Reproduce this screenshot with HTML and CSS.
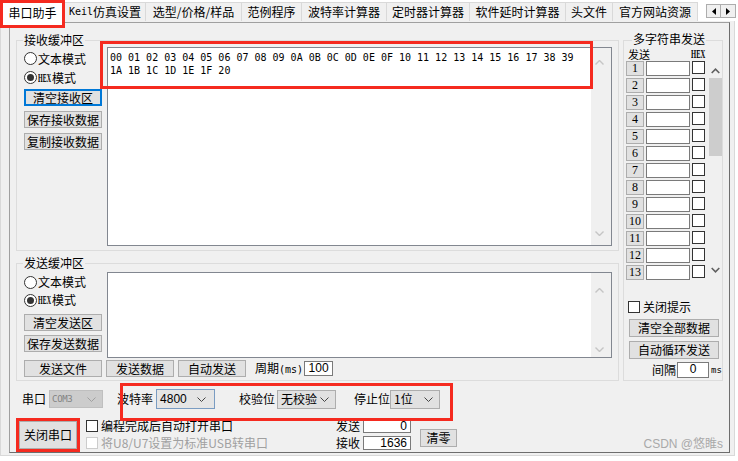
FILE: index.html
```html
<!DOCTYPE html>
<html lang="zh-CN">
<head>
<meta charset="utf-8">
<title>串口助手</title>
<link rel="stylesheet" href="styles.css">
</head>
<body>
<div class="win">
  <div class="tabs">
    <div class="tab sel t1">串口助手</div>
    <div class="tab t2"><span class="keil">Keil</span>仿真设置</div>
    <div class="tab t3">选型/价格/样品</div>
    <div class="tab t4">范例程序</div>
    <div class="tab t5">波特率计算器</div>
    <div class="tab t6">定时器计算器</div>
    <div class="tab t7">软件延时计算器</div>
    <div class="tab t8">头文件</div>
    <div class="tab t9">官方网站资源</div>
    <div class="tabnav">
      <span class="navbtn"><svg width="4" height="7" viewBox="0 0 4 7"><path d="M4 0v7L0 3.5z" fill="#000"/></svg></span>
      <span class="navbtn"><svg width="4" height="7" viewBox="0 0 4 7"><path d="M0 0v7l4-3.5z" fill="#000"/></svg></span>
    </div>
  </div>
  <div class="page">
    <div class="frame">
      <div class="top">
        <div class="leftcol">
          <div class="group recv">
            <span class="gtitle">接收缓冲区</span>
            <div class="ctrls">
              <div class="radio"><span class="rb"></span>文本模式</div>
              <div class="radio"><span class="rb on"></span><span class="hx">HEX</span>模式</div>
              <div class="btn focus b1">清空接收区</div>
              <div class="btn b2">保存接收数据</div>
              <div class="btn b2">复制接收数据</div>
            </div>
            <div class="memo recvmemo">
              <div class="memotext">00 01 02 03 04 05 06 07 08 09 0A 0B 0C 0D 0E 0F 10 11 12 13 14 15 16 17 38 39<br>1A 1B 1C 1D 1E 1F 20</div>
              <div class="vs">
                <svg width="9" height="5" viewBox="0 0 9 5"><path d="M.5 4.5l4-4 4 4" stroke="#c5c5c5" stroke-width="1.4" fill="none"/></svg>
                <svg width="9" height="5" viewBox="0 0 9 5"><path d="M.5.5l4 4 4-4" stroke="#c5c5c5" stroke-width="1.4" fill="none"/></svg>
              </div>
              <div class="mark markhex"></div>
            </div>
          </div>
          <div class="group send">
            <span class="gtitle">发送缓冲区</span>
            <div class="srow">
              <div class="ctrls sctrls">
                <div class="radio sr"><span class="rb"></span>文本模式</div>
                <div class="radio sr"><span class="rb on"></span><span class="hx">HEX</span>模式</div>
                <div class="btn b3">清空发送区</div>
                <div class="btn b4">保存发送数据</div>
              </div>
              <div class="memo sendmemo">
                <div class="memotext"></div>
                <div class="vs vs2">
                  <svg width="9" height="5" viewBox="0 0 9 5"><path d="M.5 4.5l4-4 4 4" stroke="#c5c5c5" stroke-width="1.4" fill="none"/></svg>
                  <svg width="9" height="5" viewBox="0 0 9 5"><path d="M.5.5l4 4 4-4" stroke="#c5c5c5" stroke-width="1.4" fill="none"/></svg>
                </div>
              </div>
            </div>
            <div class="sbar">
              <div class="btn w78">发送文件</div>
              <div class="btn w68 ml4">发送数据</div>
              <div class="btn w68 ml4">自动发送</div>
              <span class="period">周期<span class="mono">(ms)</span></span>
              <div class="edit e100">100</div>
            </div>
          </div>
        </div>
        <div class="group multi">
          <span class="gtitle mtitle">多字符串发送</span>
          <div class="mhead"><span>发送</span><span class="hx hx2">HEX</span></div>
          <div class="mlist">
            <div class="mrows">
              <div class="mrow"><span class="nbtn">1</span><span class="medit"></span><span class="cb"></span></div>
              <div class="mrow"><span class="nbtn">2</span><span class="medit"></span><span class="cb"></span></div>
              <div class="mrow"><span class="nbtn">3</span><span class="medit"></span><span class="cb"></span></div>
              <div class="mrow"><span class="nbtn">4</span><span class="medit"></span><span class="cb"></span></div>
              <div class="mrow"><span class="nbtn">5</span><span class="medit"></span><span class="cb"></span></div>
              <div class="mrow"><span class="nbtn">6</span><span class="medit"></span><span class="cb"></span></div>
              <div class="mrow"><span class="nbtn">7</span><span class="medit"></span><span class="cb"></span></div>
              <div class="mrow"><span class="nbtn">8</span><span class="medit"></span><span class="cb"></span></div>
              <div class="mrow"><span class="nbtn">9</span><span class="medit"></span><span class="cb"></span></div>
              <div class="mrow"><span class="nbtn">10</span><span class="medit"></span><span class="cb"></span></div>
              <div class="mrow"><span class="nbtn">11</span><span class="medit"></span><span class="cb"></span></div>
              <div class="mrow"><span class="nbtn">12</span><span class="medit"></span><span class="cb"></span></div>
              <div class="mrow"><span class="nbtn">13</span><span class="medit"></span><span class="cb"></span></div>
            </div>
            <div class="mscroll">
              <svg width="9" height="6" viewBox="0 0 9 6"><path d="M.7 5l3.8-3.8L8.3 5" stroke="#606060" stroke-width="1.6" fill="none"/></svg>
              <div class="thumb"></div>
              <div class="fill"></div>
              <svg width="9" height="6" viewBox="0 0 9 6"><path d="M.7 1l3.8 3.8L8.3 1" stroke="#606060" stroke-width="1.6" fill="none"/></svg>
            </div>
          </div>
          <div class="chk tipchk"><span class="cb"></span>关闭提示</div>
          <div class="btn mbtn m1">清空全部数据</div>
          <div class="btn mbtn m2">自动循环发送</div>
          <div class="gaprow"><span class="lbl">间隔</span><div class="edit e0">0</div><span class="mono ms">ms</span></div>
        </div>
      </div>
      <div class="bottom">
        <div class="brow1">
          <span class="lbl com">串口</span>
          <div class="combo dis cw54"><span class="c3">COM3</span><svg width="9" height="5" viewBox="0 0 9 5"><path d="M.5.5l4 4 4-4" stroke="#a0a0a0" fill="none"/></svg></div>
          <div class="serial">
            <span class="lbl">波特率</span>
            <div class="combo hot cw59"><span>4800</span><svg width="9" height="5" viewBox="0 0 9 5"><path d="M.5.5l4 4 4-4" stroke="#444" fill="none"/></svg></div>
            <span class="lbl ml24">校验位</span>
            <div class="combo cw59 ml2"><span class="cjk">无校验</span><svg width="9" height="5" viewBox="0 0 9 5"><path d="M.5.5l4 4 4-4" stroke="#444" fill="none"/></svg></div>
            <span class="lbl ml18">停止位</span>
            <div class="combo cw50"><span class="cjk">1位</span><svg width="9" height="5" viewBox="0 0 9 5"><path d="M.5.5l4 4 4-4" stroke="#444" fill="none"/></svg></div>
          </div>
        </div>
        <div class="brow2">
          <div class="closewrap"><div class="btn closebtn">关闭串口</div></div>
          <div class="chkcol">
            <div class="chk"><span class="cb"></span>编程完成后自动打开串口</div>
            <div class="chk off"><span class="cb"></span>将U8/U7设置为标准USB转串口</div>
          </div>
          <div class="stats">
            <div class="srow2"><span class="lbl">发送</span><div class="edit cnt">0</div></div>
            <div class="srow2"><span class="lbl">接收</span><div class="edit cnt">1636</div></div>
          </div>
          <div class="btn clr">清零</div>
        </div>
      </div>
      <div class="wm">CSDN @悠睢s</div>
    </div>
  </div>
</div>
</body>
</html>
```
FILE: styles.css
```css
*{box-sizing:border-box;margin:0;padding:0}
html,body{background:#fff}
body{font-family:"Noto Sans CJK SC","Noto Sans",sans-serif;font-size:12px;line-height:14px;color:#000}
.win{width:738px;height:461px;overflow:hidden}

.tabs{display:flex;height:21px;position:relative;z-index:3}
.tab{flex:none;height:19px;margin-top:2px;background:#f0f0f0;border:1px solid #d9d9d9;border-left:none;border-bottom:none;display:flex;align-items:center;justify-content:center;white-space:nowrap}
.tab.sel{height:28px;margin-top:0;border:3px solid #f52a1f;background:#fff;align-items:flex-start;padding-top:3px}
.t1{width:65px}.t2{width:81px}.t3{width:96px}.t4{width:60px}.t5{width:85px}.t6{width:83px}.t7{width:96px}.t8{width:47px}.t9{width:85px}
.keil{font-family:"DejaVu Sans Mono",monospace;font-size:10px}
.tabnav{display:flex;margin:4px 0 0 8px;height:14px}
.navbtn{width:15px;height:14px;border:1px solid #adadad;background:#f0f0f0;display:flex;align-items:center;justify-content:center}
.navbtn+.navbtn{border-left:none}

.page{position:relative;z-index:1;width:735px;height:435px;background:#f0f0f0;border:1px solid #d9d9d9;border-top:none;padding:1px 0 0 8px}
.frame{position:relative;width:721px;height:431px;border:1px solid #a0a0a0;border-right-color:#6d6d6d;border-bottom-color:#6d6d6d;padding:17px 0 0 6px}

.top{display:flex;height:341px}
.leftcol{width:603px;display:flex;flex-direction:column;gap:12px;flex:none}
.group{position:relative;border:1px solid #dcdcdc}
.gtitle{position:absolute;top:-8px;left:6px;padding:0 1px;background:#f0f0f0;line-height:14px;white-space:nowrap}

.recv{height:211px;display:flex;padding:6px 6px 4px 7px}
.ctrls{width:83px;flex:none;padding-top:2px}
.radio{display:flex;align-items:center;height:19px;white-space:nowrap}
.rb{width:13px;height:13px;border:1px solid #333;border-radius:50%;background:#fff;margin-right:1px;position:relative;flex:none}
.rb.on::after{content:"";position:absolute;left:2px;top:2px;width:7px;height:7px;border-radius:50%;background:#333}
.hx{display:inline-block;width:14px;font-family:"Liberation Serif",serif;font-weight:bold;font-size:12px;line-height:14px;transform:scaleX(.5);transform-origin:left center;white-space:nowrap;flex:none}

.btn{height:17px;border:1px solid #adadad;background:#e1e1e1;display:flex;align-items:center;justify-content:center;white-space:nowrap;flex:none}
.ctrls .btn{width:78px}
.b1{margin-top:2px;border:2px solid #0078d7}
.b2{margin-top:5px}
.b3{margin-top:5px}
.b4{margin-top:4px}

.memo{position:relative;border:1px solid #828790;background:#fff;display:flex;flex:none}
.recvmemo{width:505px;height:199px}
.memotext{flex:1;padding:3px 0 0 2px;font-family:"DejaVu Sans Mono",monospace;font-size:10px;line-height:13px;white-space:nowrap}
.vs{width:20px;background:#f0f0f0;display:flex;flex-direction:column;justify-content:space-between;align-items:center;padding:12px 3px 9px 0}
.mark{position:absolute;border:3px solid #f52a1f;pointer-events:none}
.markhex{left:-8px;top:-7px;width:493px;height:48px}

.send{height:118px;display:flex;flex-direction:column;padding:8px 6px 2px 7px}
.srow{display:flex;height:86px}
.sctrls{padding-top:1px}
.radio.sr{height:18px}
.sendmemo{width:505px;height:86px}
.vs2{padding:15px 3px 5px 0}
.sbar{display:flex;align-items:center;margin-top:2px;height:17px}
.w78{width:78px}.w68{width:68px}.ml4{margin-left:4px}
.period{margin-left:9px;white-space:nowrap}
.mono{font-family:"DejaVu Sans Mono",monospace;font-size:10px}
.edit{background:#fff;border:1px solid #7a7a7a;font-family:"Liberation Sans",sans-serif;font-size:12px;line-height:13px;flex:none}
.e100{width:29px;height:15px;margin-left:1px;text-align:center}

.multi{width:100px;height:341px;margin-left:4px;flex:none;padding:6px 0 0 0}
.mtitle{left:8px;line-height:13px;top:-9px}
.mhead{display:flex;justify-content:space-between;align-items:center;height:13px;padding:0 15px 0 4px;line-height:12px;font-size:11px}
.hx2{width:16px;line-height:12px;font-size:12px;transform:scaleX(.55)}
.mlist{display:flex;padding-left:2px;margin-top:1px}
.mrows{display:flex;flex-direction:column;gap:2px}
.mrow{display:flex;height:15px;gap:2px;align-items:flex-start}
.nbtn{width:18px;height:15px;border:1px solid #adadad;background:#e1e1e1;font-family:"Liberation Serif",serif;font-size:12px;line-height:13px;text-align:center}
.medit{width:44px;height:15px;border:1px solid #7a7a7a;background:#fff}
.cb{width:13px;height:13px;border:1px solid #333;background:#fff;flex:none}
.mscroll{width:14px;height:219px;margin-left:3px;display:flex;flex-direction:column;align-items:center;padding-top:7px}
.thumb{width:13px;height:78px;background:#cdcdcd;margin-top:4px}
.fill{flex:1}
.mscroll svg:last-child{margin-bottom:7px}
.chk{display:flex;align-items:center;gap:3px;white-space:nowrap}
.tipchk{margin:20px 0 0 4px;height:13px}
.tipchk .cb{width:12px;height:12px}
.mbtn{width:90px;height:18px;margin-left:5px}
.m1{margin-top:6px}
.m2{margin-top:4px}
.gaprow{display:flex;align-items:center;margin:3px 0 0 28px;height:16px;white-space:nowrap}
.e0{width:32px;height:16px;margin-left:1px;text-align:center}
.ms{font-size:9px;margin-left:2px;flex:none}

.bottom{display:flex;flex-direction:column}
.brow1{display:flex;align-items:center;height:32px;margin-top:2px}
.lbl{white-space:nowrap;flex:none}
.com{margin-left:6px}
.combo{display:flex;align-items:center;justify-content:space-between;height:19px;border:1px solid #adadad;background:#e1e1e1;padding:0 6px 0 3px;font-family:"Liberation Sans",sans-serif;font-size:12px;line-height:14px;flex:none;white-space:nowrap}
.combo span{flex:none}
.combo .cjk{font-family:"Noto Sans CJK SC",sans-serif}
.combo svg{flex:none}
.combo.dis{background:#cccccc;border-color:#bfbfbf;color:#838383;margin-left:3px;height:18px;padding-left:2px}
.c3{font-family:"DejaVu Sans Mono",monospace;font-size:9px;letter-spacing:-.3px}
.combo.hot{border-color:#7a9cc2;background:#e5e5e5;margin-left:3px;height:20px;padding-right:8px}
.cw54{width:54px}.cw59{width:59px}.cw50{width:50px}
.ml24{margin-left:24px}.ml2{margin-left:2px}.ml18{margin-left:18px}
.serial{position:relative;display:flex;align-items:center;margin-left:14px;height:32px}
.serial::after{content:"";position:absolute;left:3px;top:0;width:327px;height:32px;border:3px solid #f52a1f}

.brow2{display:flex;margin-top:2px}
.closewrap{width:64px;height:34px;border:3px solid #f52a1f;margin-top:1px}
.closebtn{width:58px;height:28px}
.chkcol{width:250px;margin-left:6px;display:flex;flex-direction:column}
.chkcol .chk{height:17px}
.chkcol .cb{width:12px;height:12px}
.chk.off{color:#a0a0a0}
.chk.off .cb{border-color:#cccccc}
.stats{display:flex;flex-direction:column}
.srow2{display:flex;align-items:center;height:17px;gap:3px}
.cnt{width:48px;height:14px;text-align:right;padding-right:3px}
.clr{width:37px;height:18px;margin:12px 0 0 9px}

.wm{position:absolute;right:6px;bottom:1px;color:#a9a9a9;font-family:"Liberation Sans","Noto Sans CJK SC",sans-serif;font-size:12px;line-height:14px}
```
